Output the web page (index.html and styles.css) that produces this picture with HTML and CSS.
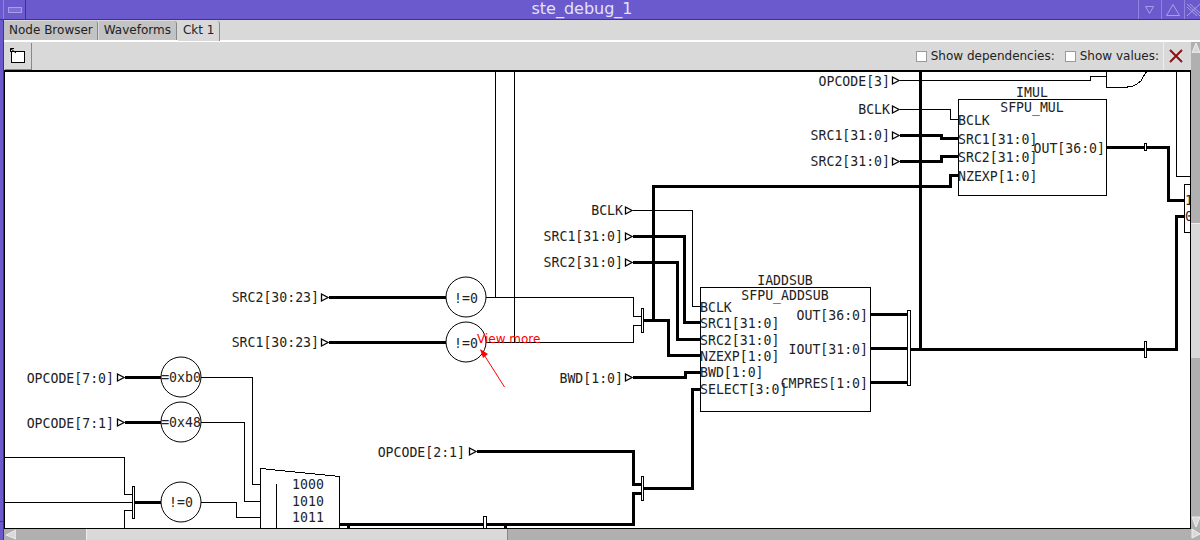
FILE: index.html
```html
<html>
<head>
    <link rel="stylesheet" href="styles.css">
</head>
<body>
<div class="window">
    <div class="titlebar">
        <div class="wm-btn wm-menu"><span class="menu-glyph"></span></div>
        <div class="title">ste_debug_1</div>
        <div class="wm-btn wm-small">
            <svg width="22" height="19"><polygon class="wm-line" points="6.5,6.5 14.5,6.5 10.5,13.5"/></svg>
        </div>
        <div class="wm-btn wm-small">
            <svg width="22" height="19"><polygon class="wm-line" points="11,4.5 4.5,15.5 17.5,15.5"/></svg>
        </div>
        <div class="wm-btn wm-close">
            <svg width="16" height="19"><path class="wm-line" d="M2 4 L15 16 M15 4 L2 16 M5 4 L16 14 M2 7 L12 16"/></svg>
        </div>
    </div>
    <div class="body-row">
        <div class="edge"></div>
        <div class="app">
            <div class="tabs">
                <div class="tab tab-first">Node Browser</div>
                <div class="tab">Waveforms</div>
                <div class="tab active">Ckt 1</div>
            </div>
            <div class="work">
                <div class="main-col">
                    <div class="toolbar">
                        <div class="tool-btn">
                            <svg width="16" height="16" viewBox="0 0 16 16">
                                <rect class="fit-box" x="1.5" y="3.5" width="13" height="11"/>
                                <path class="fit-arrow" d="M0.5 0.5 L6 5 M0.5 0.5 L4 0.5 M0.5 0.5 L0.5 4"/>
                            </svg>
                        </div>
                        <div class="spacer"></div>
                        <label class="check check-dep"><span class="box"></span>Show dependencies:</label>
                        <label class="check"><span class="box"></span>Show values:</label>
                        <div class="close-btn">
                            <svg width="16" height="16" viewBox="0 0 16 16"><path d="M2 2 L14 14 M14 2 L2 14"/></svg>
                        </div>
                    </div>
                    <svg class="schematic" viewBox="5 72 1185 456">
                        <defs>
                            <polygon id="port" class="port" points="0.5,-3.5 7,0 0.5,3.5"/>
                        </defs>

                        <!-- top right -->
                        <polyline class="thin" points="900,80.5 1090.5,80.5 1090.5,76.5 1107,76.5"/>
                        <polyline class="thin" points="1106.5,71 1106.5,87.5 1127,87.5 1128,86.5 1133,86 1137,84 1141,81 1143,77 1147,71"/>
                        <polyline class="thin" points="1176.5,71 1176.5,176.5 1190,176.5"/>
                        <polyline class="thin" points="900,109.5 950.5,109.5 950.5,119.5 958,119.5"/>
                        <polyline class="bus" points="900,135.5 941.5,135.5 941.5,138.5 958,138.5"/>
                        <polyline class="bus" points="900,161.5 941.5,161.5 941.5,156.5 958,156.5"/>
                        <polyline class="bus" points="653.5,320 653.5,186.5 950.5,186.5 950.5,175.5 958,175.5"/>
                        <polyline class="bus" points="920.5,71 920.5,349.5"/>
                        <polyline class="bus" points="911,349.5 1176.5,349.5 1176.5,216.5 1185,216.5"/>
                        <polyline class="bus" points="1106,147.5 1168.5,147.5 1168.5,200.5 1185,200.5"/>
                        <rect class="tap" x="1144.5" y="143.5" width="2" height="7"/>
                        <rect class="tap" x="1144.5" y="341.5" width="2" height="16"/>

                        <!-- right mux, mostly off the edge -->
                        <polyline class="thin" points="1190,184.5 1184.5,184.5 1184.5,232.5 1190,232.5"/>
                        <text class="sig" x="1185" y="205">1</text>
                        <text class="sig" x="1185" y="221">0</text>

                        <rect class="block" x="958.5" y="99.5" width="148" height="96"/>
                        <text class="sig mid" x="1032" y="97">IMUL</text>
                        <text class="sig mid" x="1032" y="112">SFPU_MUL</text>
                        <text class="sig" x="958" y="125">BCLK</text>
                        <text class="sig" x="958" y="144">SRC1[31:0]</text>
                        <text class="sig" x="958" y="162">SRC2[31:0]</text>
                        <text class="sig" x="958" y="181">NZEXP[1:0]</text>
                        <text class="sig end" x="1105" y="153">OUT[36:0]</text>

                        <!-- adder -->
                        <polyline class="thin" points="633,210.5 692.5,210.5 692.5,306.5 700,306.5"/>
                        <polyline class="bus" points="633,236.5 684.5,236.5 684.5,322.5 700,322.5"/>
                        <polyline class="bus" points="633,262.5 677.5,262.5 677.5,339.5 700,339.5"/>
                        <polyline class="bus" points="644,320.5 668.5,320.5 668.5,355.5 700,355.5"/>
                        <polyline class="bus" points="633,377.5 685.5,377.5 685.5,372.5 700,372.5"/>
                        <polyline class="bus" points="643,488.5 692.5,488.5 692.5,389.5 700,389.5"/>
                        <polyline class="thin" points="486,297.5 633.5,297.5 633.5,316.5 641,316.5"/>
                        <polyline class="thin" points="486,342.5 633.5,342.5 633.5,325.5 641,325.5"/>
                        <rect class="tap" x="641.5" y="308.5" width="2" height="24"/>
                        <polyline class="thin" points="495.5,71 495.5,297"/>
                        <polyline class="thin" points="514.5,71 514.5,342"/>

                        <rect class="block" x="700.5" y="287.5" width="170" height="124"/>
                        <text class="sig mid" x="785" y="285">IADDSUB</text>
                        <text class="sig mid" x="785" y="300">SFPU_ADDSUB</text>
                        <text class="sig" x="700" y="312">BCLK</text>
                        <text class="sig" x="700" y="328">SRC1[31:0]</text>
                        <text class="sig" x="700" y="345">SRC2[31:0]</text>
                        <text class="sig" x="700" y="361">NZEXP[1:0]</text>
                        <text class="sig" x="700" y="377">BWD[1:0]</text>
                        <text class="sig" x="700" y="394">SELECT[3:0]</text>
                        <text class="sig end" x="868" y="320">OUT[36:0]</text>
                        <text class="sig end" x="868" y="354">IOUT[31:0]</text>
                        <text class="sig end" x="868" y="388">CMPRES[1:0]</text>
                        <polyline class="bus" points="870,314.5 908,314.5"/>
                        <polyline class="bus" points="870,348.5 908,348.5"/>
                        <polyline class="bus" points="870,382.5 908,382.5"/>
                        <rect class="tap" x="907.5" y="310.5" width="3" height="75"/>

                        <!-- comparators -->
                        <polyline class="bus" points="329,297.5 446,297.5"/>
                        <polyline class="bus" points="329,342.5 446,342.5"/>
                        <circle class="cmp" cx="466" cy="297" r="20"/>
                        <circle class="cmp" cx="466" cy="342" r="20"/>
                        <text class="sig mid" x="466" y="303">!=0</text>
                        <text class="sig mid" x="466" y="348">!=0</text>

                        <polyline class="bus" points="125,377.5 161,377.5"/>
                        <polyline class="bus" points="125,422.5 161,422.5"/>
                        <polyline class="bus" points="135,502.5 161,502.5"/>
                        <polyline class="thin" points="201,377.5 252.5,377.5 252.5,484.5 260,484.5"/>
                        <polyline class="thin" points="201,422.5 244.5,422.5 244.5,501.5 260,501.5"/>
                        <polyline class="thin" points="201,502.5 236.5,502.5 236.5,517.5 260,517.5"/>
                        <circle class="cmp" cx="181" cy="377" r="20"/>
                        <circle class="cmp" cx="181" cy="422" r="20"/>
                        <circle class="cmp" cx="181" cy="502" r="20"/>
                        <text class="sig mid" x="181" y="382">=0xb0</text>
                        <text class="sig mid" x="181" y="427">=0x48</text>
                        <text class="sig mid" x="181" y="507">!=0</text>

                        <!-- lower left -->
                        <polyline class="thin" points="5,457.5 124.5,457.5 124.5,494.5 133,494.5"/>
                        <polyline class="thin" points="5,502.5 133,502.5"/>
                        <polyline class="thin" points="133,510.5 124.5,510.5 124.5,529"/>
                        <rect class="tap" x="132.5" y="486.5" width="2" height="32"/>

                        <polygon class="block" points="260.5,530 260.5,468.5 339.5,476.5 339.5,530"/>
                        <polyline class="thin" points="276.5,484 276.5,529"/>
                        <text class="sig mid" x="308" y="489">1000</text>
                        <text class="sig mid" x="308" y="506">1010</text>
                        <text class="sig mid" x="308" y="522">1011</text>

                        <!-- lower middle -->
                        <polyline class="bus" points="340,524.5 633.5,524.5 633.5,493.5 641,493.5"/>
                        <polyline class="bus" points="477,451.5 633.5,451.5 633.5,484.5 641,484.5"/>
                        <rect class="tap" x="641.5" y="476.5" width="2" height="24"/>
                        <rect class="tap" x="483.5" y="516.5" width="3" height="12"/>
                        <polyline class="bus" points="348.5,524 348.5,530"/>
                        <polyline class="bus" points="505.5,524 505.5,530"/>

                        <!-- ports -->
                        <text class="sig end" x="890" y="86">OPCODE[3]</text>
                        <use href="#port" x="892" y="80.5"/>
                        <text class="sig end" x="890" y="114">BCLK</text>
                        <use href="#port" x="892" y="109.5"/>
                        <text class="sig end" x="890" y="140">SRC1[31:0]</text>
                        <use href="#port" x="892" y="135.5"/>
                        <text class="sig end" x="890" y="166">SRC2[31:0]</text>
                        <use href="#port" x="892" y="161.5"/>
                        <text class="sig end" x="623" y="215">BCLK</text>
                        <use href="#port" x="625" y="210.5"/>
                        <text class="sig end" x="623" y="241">SRC1[31:0]</text>
                        <use href="#port" x="625" y="236.5"/>
                        <text class="sig end" x="623" y="267">SRC2[31:0]</text>
                        <use href="#port" x="625" y="262.5"/>
                        <text class="sig end" x="623" y="383">BWD[1:0]</text>
                        <use href="#port" x="625" y="377.5"/>
                        <text class="sig end" x="319" y="302">SRC2[30:23]</text>
                        <use href="#port" x="321" y="297.5"/>
                        <text class="sig end" x="319" y="347">SRC1[30:23]</text>
                        <use href="#port" x="321" y="342.5"/>
                        <text class="sig end" x="114" y="383">OPCODE[7:0]</text>
                        <use href="#port" x="117" y="377.5"/>
                        <text class="sig end" x="114" y="428">OPCODE[7:1]</text>
                        <use href="#port" x="117" y="422.5"/>
                        <text class="sig end" x="465" y="457">OPCODE[2:1]</text>
                        <use href="#port" x="469" y="451.5"/>

                        <!-- note on top of the drawing -->
                        <text class="note" x="477" y="343">View more</text>
                        <path class="note-line" d="M504.5 387 L481 350"/>
                        <polygon class="note-head" points="480,349 488,354 483,358"/>
                    </svg>
                    <div class="hscroll">
                        <div class="arrow-h">
                            <svg width="12" height="11"><polygon class="arrow" points="12,1 12,10 2,6"/></svg>
                        </div>
                        <div class="trough-a"></div>
                        <div class="thumb-h"></div>
                        <div class="trough-b"></div>
                    </div>
                </div>
                <div class="vscroll">
                    <div class="arrow-v">
                        <svg width="9" height="11"><polygon class="arrow" points="5,1 9,11 1,11"/></svg>
                    </div>
                    <div class="v-trough-a"></div>
                    <div class="thumb-v"></div>
                    <div class="v-trough-b"></div>
                    <div class="arrow-v">
                        <svg width="9" height="11"><polygon class="arrow" points="1,1 9,1 5,11"/></svg>
                    </div>
                    <div class="arrow-v">
                        <svg width="9" height="11"><polygon class="arrow" points="1,1 1,10 9,6"/></svg>
                    </div>
                </div>
            </div>
        </div>
    </div>
</div>
</body>
</html>
```

FILE: styles.css
```css
html, body {margin: 0; padding: 0; overflow: hidden; background: #d9d9d9;}
body {font-family: "DejaVu Sans", sans-serif; font-size: 12px; color: #222;}

.window {width: 1200px; height: 540px; display: flex; flex-direction: column; overflow: hidden;}

.titlebar {
    display: flex;
    flex: 0 0 20px;
    height: 20px;
    box-sizing: border-box;
    background: #6a5acd;
    border-bottom: 1px solid #3d3290;
}
.title {flex: 1; text-align: center; font-size: 16px; line-height: 18px; color: #e4e1f7;}
.wm-btn {height: 19px; overflow: hidden; border-left: 1px solid #8f83dc; box-sizing: border-box;}
.wm-menu {width: 23px; margin-left: 3px; border-right: 1px solid #3d3290; display: flex; align-items: center; justify-content: center;}
.menu-glyph {display: block; width: 12px; height: 4px; border: 1px solid #a89fe6; background: #7d6ed6;}
.wm-small {width: 23px;}
.wm-close {width: 16px;}
.wm-line {fill: none; stroke: #a89fe6; stroke-width: 1;}

.body-row {display: flex; flex: 1; min-height: 0;}
.edge {width: 3px; background: #6a5acd; border-right: 1px solid #3d3290; display: flex; align-items: flex-end; padding-bottom: 18px; box-sizing: content-box;}
.edge::after {content: ""; display: block; width: 100%; height: 1px; background: #3d3290;}
.app {flex: 1; display: flex; flex-direction: column; min-width: 0;}

.tabs {display: flex; flex: 0 0 22px; height: 22px; gap: 1px; background: #d9d9d9; border-bottom: 2px solid #fff; box-sizing: border-box; padding-top: 1px;}
.tab {
    background: #c3c3c3;
    padding: 0 5px;
    line-height: 19px;
    height: 19px;
    border-right: 1px solid #888;
    border-radius: 0 3px 0 0;
}
.tab-first {padding-right: 4px;}
.tab.active {background: #d9d9d9; height: 20px;}

.work {display: flex; flex: 1; min-height: 0;}
.main-col {width: 1187px; display: flex; flex-direction: column; min-height: 0;}

.toolbar {display: flex; align-items: center; flex: 0 0 28px; height: 28px; background: #d9d9d9;}
.spacer {flex: 1;}
.tool-btn {
    width: 27px;
    height: 27px;
    display: flex;
    align-items: center;
    justify-content: center;
    background: #d9d9d9;
    border-right: 1px solid #888;
    border-bottom: 1px solid #888;
    box-sizing: border-box;
    margin-left: 1px;
}
.fit-box {fill: #fff; stroke: #000;}
.fit-arrow {fill: none; stroke: #000;}
.check {display: flex; align-items: center; margin-right: 4px; font-size: 12px;}
.check-dep {margin-right: 10px;}
.box {display: block; width: 9px; height: 9px; margin-right: 4px; background: #fff; border: 1px solid #999;}
.close-btn {
    width: 28px;
    height: 28px;
    box-sizing: border-box;
    display: flex;
    align-items: center;
    justify-content: center;
    padding-right: 3px;
    background: #d9d9d9;
    border-left: 1px solid #eee;
}
.close-btn svg {fill: none; stroke: #8b1010; stroke-width: 2;}

.schematic {
    display: block;
    flex: 0 0 459px;
    background: #fff;
    border-top: 2px solid #000;
    border-left: 1px solid #000;
    border-right: 1px solid #000;
    border-bottom: 1px solid #000;
    box-sizing: border-box;
    width: 1187px;
    height: 459px;
}

.thin {fill: none; stroke: #000; stroke-width: 1; shape-rendering: crispEdges;}
.bus {fill: none; stroke: #000; stroke-width: 3; shape-rendering: crispEdges;}
.block {fill: #fff; stroke: #000; stroke-width: 1; shape-rendering: crispEdges;}
.cmp {fill: #fff; stroke: #000; stroke-width: 1;}
.tap {fill: #fff; stroke: #000; stroke-width: 1; shape-rendering: crispEdges;}
.port {fill: #fff; stroke: #000; stroke-width: 1.3;}
.sig {font-family: "DejaVu Sans Mono", monospace; font-size: 13.2px; fill: #222;}
.mid {text-anchor: middle;}
.end {text-anchor: end;}
.note {font-family: "DejaVu Sans", sans-serif; font-size: 12px; fill: #f00;}
.note-line {fill: none; stroke: #f00; stroke-width: 1;}
.note-head {fill: #f00;}

.hscroll {display: flex; flex: 1; background: #b0b0b0;}
.arrow-h {width: 12px;}
.trough-a {width: 70px;}
.thumb-h {width: 422px; background: #d9d9d9; border-left: 1px solid #eee; border-right: 1px solid #888; box-sizing: border-box;}
.trough-b {flex: 1;}
.arrow {fill: #d9d9d9; stroke: #eee; stroke-width: 1;}

.vscroll {flex: 1; display: flex; flex-direction: column; background: #b0b0b0;}
.arrow-v {height: 12px; flex: 0 0 12px;}
.v-trough-a {flex: 0 0 169px;}
.thumb-v {flex: 0 0 134px; background: #d9d9d9; border-top: 1px solid #eee;}
.v-trough-b {flex: 1;}
```
